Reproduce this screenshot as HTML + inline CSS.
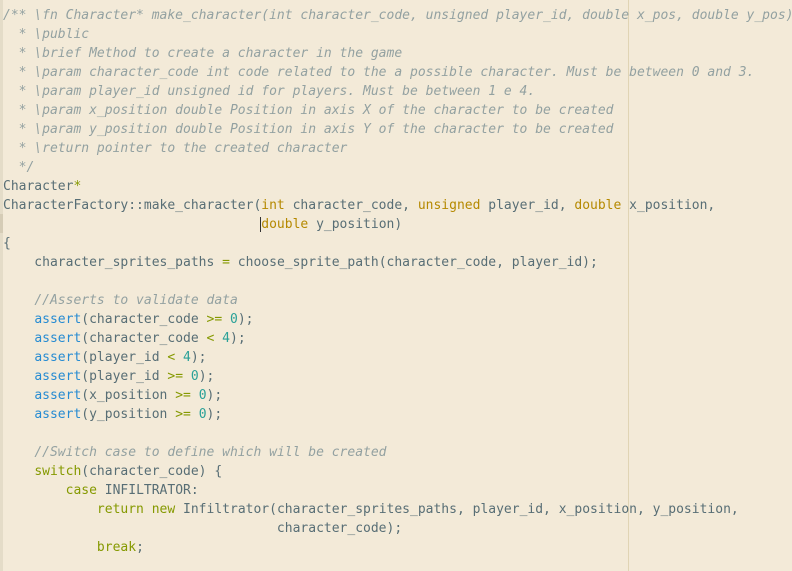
<!DOCTYPE html>
<html><head><meta charset="utf-8"><style>
html,body{margin:0;padding:0}
body{width:792px;height:571px;overflow:hidden;background:#f3ead8;position:relative;font-family:"DejaVu Sans Mono","Liberation Mono",monospace;font-size:13px;color:#586e75}
.g{position:absolute;left:0;top:0;width:3px;height:571px;background:#e4dcc8}
.gh{position:absolute;left:0;top:214px;width:3px;height:19px;background:#d5ccb6}
.vl{position:absolute;left:628px;top:0;width:1px;height:571px;background:#e0d4b4}
pre{position:absolute;left:3px;top:6px;margin:0;font:inherit;line-height:19px;white-space:pre}
.c{color:#93a1a1;font-style:italic}
.k{color:#b58900}
.s{color:#859900}
.f{color:#268bd2}
.n{color:#2aa198}
.cur{border-left:1px solid #333;margin-left:-1px}
</style></head><body>
<div class="g"></div><div class="gh"></div><div class="vl"></div>
<pre><span class="c">/** \fn Character* make_character(int character_code, unsigned player_id, double x_pos, double y_pos)
  * \public
  * \brief Method to create a character in the game
  * \param character_code int code related to the a possible character. Must be between 0 and 3.
  * \param player_id unsigned id for players. Must be between 1 e 4.
  * \param x_position double Position in axis X of the character to be created
  * \param y_position double Position in axis Y of the character to be created
  * \return pointer to the created character
  */</span>
Character<span class="s">*</span>
CharacterFactory::make_character(<span class="k">int</span> character_code, <span class="k">unsigned</span> player_id, <span class="k">double</span> x_position,
                                 <span class="k cur">double</span> y_position)
{
    character_sprites_paths <span class="s">=</span> choose_sprite_path(character_code, player_id);

    <span class="c">//Asserts to validate data</span>
    <span class="f">assert</span>(character_code <span class="s">&gt;=</span> <span class="n">0</span>);
    <span class="f">assert</span>(character_code <span class="s">&lt;</span> <span class="n">4</span>);
    <span class="f">assert</span>(player_id <span class="s">&lt;</span> <span class="n">4</span>);
    <span class="f">assert</span>(player_id <span class="s">&gt;=</span> <span class="n">0</span>);
    <span class="f">assert</span>(x_position <span class="s">&gt;=</span> <span class="n">0</span>);
    <span class="f">assert</span>(y_position <span class="s">&gt;=</span> <span class="n">0</span>);

    <span class="c">//Switch case to define which will be created</span>
    <span class="s">switch</span>(character_code) {
        <span class="s">case</span> INFILTRATOR:
            <span class="s">return</span> <span class="s">new</span> Infiltrator(character_sprites_paths, player_id, x_position, y_position,
                                   character_code);
            <span class="s">break</span>;
</pre>
</body></html>
